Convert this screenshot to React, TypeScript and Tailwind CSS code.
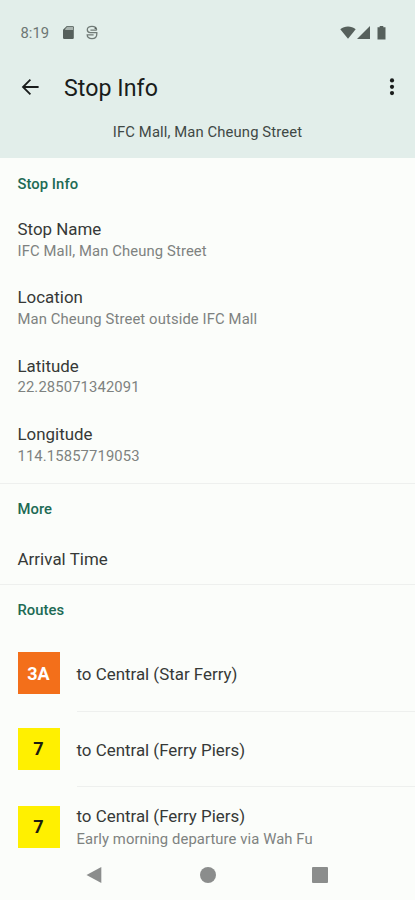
import type { ReactNode } from "react";

const DETAILS = [
  { label: "Stop Name", value: "IFC Mall, Man Cheung Street" },
  { label: "Location", value: "Man Cheung Street outside IFC Mall" },
  { label: "Latitude", value: "22.285071342091" },
  { label: "Longitude", value: "114.15857719053" },
];

const ROUTES = [
  { id: "3a", number: "3A", badge: "bg-[#f36f1a] text-white", to: "to Central (Star Ferry)" },
  { id: "7", number: "7", badge: "bg-[#fff000] text-[#1c1c10]", to: "to Central (Ferry Piers)" },
  {
    id: "7-early",
    number: "7",
    badge: "bg-[#fff000] text-[#1c1c10]",
    to: "to Central (Ferry Piers)",
    note: "Early morning departure via Wah Fu",
  },
];

function StatusBar() {
  return (
    <div className="flex h-[56px] items-center pt-[9px] pl-[20.5px] pr-[29px] text-[#56605c]">
      <span className="w-[29px] whitespace-nowrap text-[14.8px] leading-[18px] text-[#6d7673]">8:19</span>
      {/* SD card */}
      <svg className="ml-[12.5px]" width="13" height="15" viewBox="0 0 13 15">
        <path d="M4.8 1H10.6Q11.8 1 11.8 2.2V12.8Q11.8 14 10.6 14H2.2Q1 14 1 12.8V4.8Z" fill="currentColor" />
        <path d="M5.2 1.8H11V5H3.2V4Z" fill="#a9b3af" />
      </svg>
      {/* rounded badge split by two bars */}
      <svg className="ml-[10px]" width="14" height="15" viewBox="0 0 14 15" fill="none" stroke="#707a76" strokeWidth="1.3">
        <path d="M11.8 5.2H5.4M11.6 5C11.6 2.6 9.8 1.4 7 1.4C4 1.4 2.3 2.8 2.3 4.8C2.3 6.6 3.4 7.6 5.2 7.6H11.8V9C11.8 12 10 13.6 7 13.6C4 13.6 2.2 12 2.2 9.8H8.6" />
        <circle cx="10.4" cy="3.2" r="0.9" fill="#56605c" stroke="none" />
      </svg>
      <div className="ml-auto flex items-center">
        <svg width="16" height="13" viewBox="0 0 16 13">
          <path d="M0.3 3.2C4.7 -0.4 11.3 -0.4 15.7 3.2L8 12.7Z" fill="currentColor" />
        </svg>
        <svg className="ml-[1px]" width="13" height="13" viewBox="0 0 13 13">
          <path d="M13 0V13H0Z" fill="currentColor" />
        </svg>
        <svg className="ml-[7px]" width="9" height="14" viewBox="0 0 9 14">
          <path d="M2.7 0H6.3V1.3H8.5V13.5H0.5V1.3H2.7Z" fill="currentColor" />
        </svg>
      </div>
    </div>
  );
}

function SectionTitle({ children }: { children: ReactNode }) {
  return (
    <h2 className="text-[14.8px] font-medium leading-[20px] tracking-[0.05px] text-[#206a54]">{children}</h2>
  );
}

function NavigationBar() {
  return (
    <nav className="flex h-[50px] items-center text-[#8b8d8c]">
      <svg className="ml-[86px]" width="16" height="18" viewBox="0 0 16 18" fill="currentColor">
        <path d="M15.3 1V17L0.5 9Z" />
      </svg>
      <div className="ml-[98px] size-[16px] rounded-full bg-current" />
      <div className="ml-[96px] size-[16px] rounded-[1px] bg-current" />
    </nav>
  );
}

export default function App() {
  return (
    <div className="flex h-[900px] w-[415px] flex-col overflow-hidden bg-[#fbfdfa] font-[Roboto,sans-serif] text-[#363937]">
      <header className="h-[157.5px] shrink-0 bg-[#e2eeea]">
        <StatusBar />
        <div className="flex h-[62px] items-center pl-[21px] pr-[19px] text-[#191c1b]">
          <svg width="19" height="18" viewBox="0 0 19 18" fill="none" stroke="currentColor" strokeWidth="1.8">
            <path d="M17.6 9H2.4M9.4 1.6L2 9L9.4 16.4" />
          </svg>
          <h1 className="ml-[24px] pt-px text-[23.2px] leading-[28px] tracking-[0.05px]">Stop Info</h1>
          <svg className="ml-auto" width="8" height="18" viewBox="0 0 8 18" fill="currentColor">
            <circle cx="4" cy="2.4" r="2.1" />
            <circle cx="4" cy="8.8" r="2.1" />
            <circle cx="4" cy="15.1" r="2.1" />
          </svg>
        </div>
        <p className="pt-[4px] text-center text-[14.8px] leading-[20px] tracking-[0.12px] text-[#3f4845]">
          IFC Mall, Man Cheung Street
        </p>
      </header>

      <section className="h-[326px] shrink-0 border-b border-[#eef0ee] px-[17.5px] pt-[16px]">
        <SectionTitle>Stop Info</SectionTitle>
        <dl className="pt-[24.5px]">
          {DETAILS.map((item) => (
            <div key={item.label} className="h-[68.4px]">
              <dt className="text-[16.9px] leading-[22px]">{item.label}</dt>
              <dd className="pt-[0.5px] text-[14.8px] leading-[21px] tracking-[0.12px] text-[#7e8280]">{item.value}</dd>
            </div>
          ))}
        </dl>
      </section>

      <section className="h-[101.5px] shrink-0 border-b border-[#eef0ee] px-[17.5px] pt-[15px]">
        <SectionTitle>More</SectionTitle>
        <p className="pt-[29.5px] text-[16.9px] leading-[22px] tracking-[0.05px]">Arrival Time</p>
      </section>

      <section className="h-[265px] shrink-0 pl-[17.5px] pt-[15px]">
        <SectionTitle>Routes</SectionTitle>
        <ul className="pt-[16px]">
          {ROUTES.map((route) => (
            <li key={route.id} className={route.note ? "flex h-[80px] items-center" : "flex h-[75.7px] items-center"}>
              <span
                className={`mb-[1.5px] flex size-[42px] shrink-0 items-center justify-center text-[18px] font-bold ${route.badge}`}
              >
                {route.number}
              </span>
              <div
                className={
                  route.note
                    ? "ml-[17px] flex-1"
                    : "ml-[17px] flex h-full flex-1 items-center border-b border-[#eef0ee] pt-[1px]"
                }
              >
                <p className="text-[16.9px] leading-[24px]">{route.to}</p>
                {route.note && (
                  <p className="text-[14.8px] leading-[23px] tracking-[0.1px] text-[#7e8280]">{route.note}</p>
                )}
              </div>
            </li>
          ))}
        </ul>
      </section>

      <NavigationBar />
    </div>
  );
}
